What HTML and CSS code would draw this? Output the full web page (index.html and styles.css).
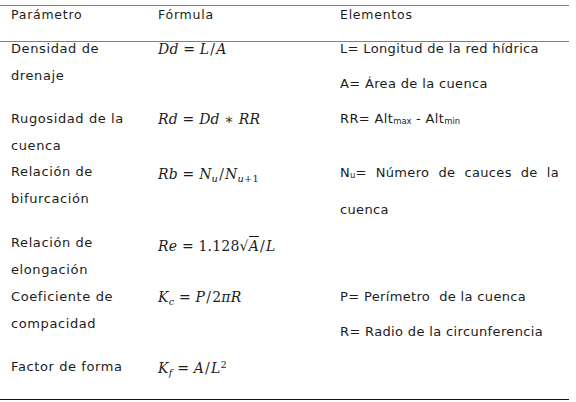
FILE: index.html
```html
<!DOCTYPE html>
<html lang="es">
<head>
<meta charset="utf-8">
<title>Parámetros morfométricos</title>
<link rel="stylesheet" href="styles.css">
</head>
<body>
<div class="page">
  <div class="table">
    <div class="row head">
      <div class="cell">Parámetro</div>
      <div class="cell">Fórmula</div>
      <div class="cell">Elementos</div>
    </div>
    <div class="tbody">
      <div class="row r1">
        <div class="cell">Densidad de drenaje</div>
        <div class="cell f">Dd <span class="up">=</span> L<span class="up sl">/</span>A</div>
        <div class="cell el">
          <p>L= Longitud de la red hídrica</p>
          <p>A= Área de la cuenca</p>
        </div>
      </div>
      <div class="row r2">
        <div class="cell">Rugosidad de la cuenca</div>
        <div class="cell f">Rd <span class="up">=</span> Dd <span class="up">∗</span> RR</div>
        <div class="cell el">
          <p>RR= Alt<sub class="ts">max</sub> - Alt<sub class="ts">min</sub></p>
        </div>
      </div>
      <div class="row r3">
        <div class="cell">Relación de bifurcación</div>
        <div class="cell f f3">Rb <span class="up">=</span> N<sub>u</sub><span class="up sl">/</span>N<sub>u<span class="up">+1</span></sub></div>
        <div class="cell el">
          <p class="just">N<sub class="ts">u</sub>= Número de cauces de la cuenca</p>
        </div>
      </div>
      <div class="row r4">
        <div class="cell">Relación de elongación</div>
        <div class="cell f f4">Re <span class="up">= 1.128√</span><span class="rad">A</span><span class="up sl">/</span>L</div>
        <div class="cell el"></div>
      </div>
      <div class="row r5">
        <div class="cell">Coeficiente de compacidad</div>
        <div class="cell f">K<sub>c</sub> <span class="up">=</span> P<span class="up sl">/</span><span class="up">2</span>πR</div>
        <div class="cell el">
          <p>P= Perímetro&nbsp; de la cuenca</p>
          <p>R= Radio de la circunferencia</p>
        </div>
      </div>
      <div class="row r6">
        <div class="cell">Factor de forma</div>
        <div class="cell f f6">K<sub>f</sub> <span class="up">=</span> A<span class="up sl">/</span>L<sup class="up">2</sup></div>
        <div class="cell el"></div>
      </div>
    </div>
  </div>
  <p class="source">Fuente: elaboración propia con base en</p>
</div>
</body>
</html>
```
FILE: styles.css
```css
html, body {
  margin: 0;
  padding: 0;
  background: #ffffff;
}
body {
  font-family: "DejaVu Sans", "Liberation Sans", sans-serif;
  color: #1c1c1c;
  overflow: hidden;
  height: 402px;
}
.page {
  padding-top: 5px;
  width: 569px;
}
.table {
  border-bottom: 1.5px solid #111;
}
.row {
  display: grid;
  grid-template-columns: 147px 183px 239px;
}
.cell {
  padding-left: 11px;
  padding-right: 10px;
}
.cell:nth-child(3) {
  padding-left: 10px;
}
.head {
  border-top: 1px solid #808080;
  border-bottom: 1px solid #808080;
  height: 35px;
  font-size: 12.5px;
  letter-spacing: 0.75px;
  line-height: 18px;
}
.tbody {
  margin-top: -6px;
  font-size: 13px;
  letter-spacing: 0.6px;
  line-height: 26.5px;
}
.r1 { height: 70px; }
.r2 { height: 53px; }
.r3 { height: 71px; }
.r4 { height: 54px; }
.r5 { height: 70px; }
.r6 { height: 45px; }
.f {
  font-family: "DejaVu Serif", "Liberation Serif", serif;
  font-style: italic;
  font-size: 14px;
  letter-spacing: 0.2px;
  white-space: nowrap;
}
.f3 { padding-top: 2px; }
.f4 { padding-top: 3px; }
.f6 { padding-top: 1px; }
.up {
  font-style: normal;
}
.sl {
  padding: 0 1px;
}
.rad {
  border-top: 1px solid #1c1c1c;
  line-height: 1;
  padding-top: 1px;
}
sub, sup {
  font-size: 0.7em;
  line-height: 0;
}
sub { vertical-align: -0.35em; }
sup { vertical-align: 0.5em; }
.ts {
  font-size: 0.65em;
  letter-spacing: 0;
  vertical-align: -0.1em;
}
.el {
  letter-spacing: 0.35px;
}
.el p {
  margin: 0 0 8px 0;
  white-space: nowrap;
}
.el p.just {
  white-space: normal;
  text-align: justify;
  line-height: 37px;
  margin-top: -5px;
}
.source {
  margin: 1px 0 0 12px;
  font-size: 12px;
  line-height: 16px;
}
```
